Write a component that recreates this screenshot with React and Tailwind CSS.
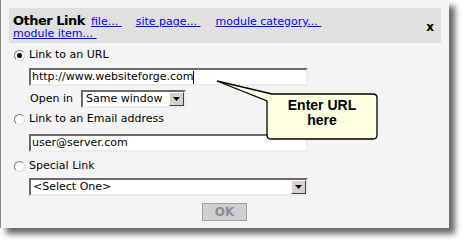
import React from "react";

const inset =
  "bg-white border-2 border-t-[#6a6a6a] border-l-[#6a6a6a] border-b-[#ececec] border-r-[#ececec]";

function Radio({ checked }) {
  return (
    <span className="relative w-[11px] h-[11px] shrink-0 rounded-full bg-white border border-t-[#7a7a7a] border-l-[#7a7a7a] border-b-[#dcdcdc] border-r-[#dcdcdc] flex items-center justify-center">
      {checked && <span className="w-[5px] h-[5px] rounded-full bg-black" />}
    </span>
  );
}

function DropButton() {
  return (
    <span className="w-[15px] h-[14px] bg-[#d6d3ce] border border-t-white border-l-white border-b-[#404040] border-r-[#404040] flex items-center justify-center">
      <svg width="7" height="4" viewBox="0 0 7 4">
        <path d="M0 0 H7 L3.5 4 Z" fill="#000" />
      </svg>
    </span>
  );
}

export default function App() {
  return (
    <div className="w-[462px] h-[240px] bg-white relative font-['DejaVu_Sans',sans-serif] text-black">
      <div className="w-[449px] h-[228px] bg-[#f4f4f4] border-l border-[#8a8a8a] shadow-[6px_6px_6px_rgba(0,0,0,0.6)] pt-2 pl-2 flex flex-col">
        {/* Header */}
        <div className="w-[432px] h-[35px] bg-[#e0e0e0] pl-1 pt-[3px] flex justify-between">
          <div className="flex flex-col">
            <div className="flex items-baseline h-[15px]">
              <span className="text-[13px] font-bold tracking-[-0.5px]">Other Link</span>
              <a className="ml-[6px] text-[11px] text-[#0000ff] underline">file...&nbsp;</a>
              <a className="ml-[14px] text-[11px] text-[#0000ff] underline">site page...&nbsp;</a>
              <a className="ml-[15px] text-[11px] text-[#0000ff] underline">module category...&nbsp;</a>
            </div>
            <div className="flex items-baseline h-[14px]">
              <a className="text-[11px] text-[#0000ff] underline">module item...&nbsp;</a>
            </div>
          </div>
          <span className="mr-[7px] mt-[10px] text-[12px] font-bold leading-none">x</span>
        </div>

        {/* Body */}
        <div className="flex flex-col text-[11px] pl-[5px]">
          <div className="mt-[5px] h-[14px] flex items-center gap-[4px]">
            <Radio checked />
            <span>Link to an URL</span>
          </div>
          <div className={`mt-[6px] ml-[15px] w-[279px] h-[18px] ${inset} pl-[1px] flex items-center`}>
            http://www.websiteforge.com<span className="w-px h-[13px] bg-black" />
          </div>
          <div className="mt-[4px] ml-[16px] h-[18px] flex items-center">
            <span className="w-[51px]">Open in</span>
            <div className={`w-[105px] h-[18px] ${inset} pl-[3px] flex items-center justify-between`}>
              <span>Same window</span>
              <DropButton />
            </div>
          </div>
          <div className="mt-[4px] h-[14px] flex items-center gap-[4px]">
            <Radio />
            <span>Link to an Email address</span>
          </div>
          <div className={`mt-[8px] ml-[15px] w-[279px] h-[18px] ${inset} pl-[1px] flex items-center`}>
            user@server.com
          </div>
          <div className="mt-[7px] h-[14px] flex items-center gap-[4px]">
            <Radio />
            <span>Special Link</span>
          </div>
          <div className={`mt-[5px] ml-[15px] w-[279px] h-[18px] ${inset} pl-[2px] flex items-center justify-between`}>
            <span>&lt;Select One&gt;</span>
            <DropButton />
          </div>
          <div className="mt-[7px] ml-[188px] w-[45px] h-[18px] bg-[#cfcfcf] border border-[#a0a0a0] flex items-center justify-center text-[12px] font-bold text-[#8c8c8c]">
            OK
          </div>
        </div>
      </div>

      {/* Callout */}
      <div className="absolute left-[216px] top-[80px] w-[163px] h-[61px]">
        <svg width="163" height="61" viewBox="216 80 163 61" className="absolute left-0 top-0">
          <path
            d="M217 81 L272 94 L373 94 Q377 94 377 98 L377 135 Q377 139 373 139 L271 139 Q267 139 267 135 L267 101 Z"
            fill="#ffffe1"
            stroke="#000"
            strokeWidth="1.3"
          />
        </svg>
        <div className="absolute left-[51px] top-[18px] w-[110px] text-center font-['Liberation_Sans',sans-serif] font-bold text-[14px] leading-[15px]">
          Enter URL
          <br />
          here
        </div>
      </div>
    </div>
  );
}
